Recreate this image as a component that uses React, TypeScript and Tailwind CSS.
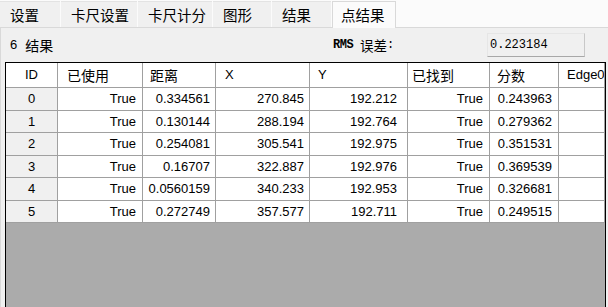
import React from 'react'

const tabs = ['设置', '卡尺设置', '卡尺计分', '图形', '结果']

// column widths include the right grid line
const cols = [
  { name: 'ID', w: 'w-[52px]', head: 'justify-center', cell: 'justify-center' },
  { name: '已使用', w: 'w-[85px]', head: 'pl-[9px]', cell: 'justify-end pr-[6px]' },
  { name: '距离', w: 'w-[73px]', head: 'pl-[7px]', cell: 'justify-end pr-[5px]' },
  { name: 'X', w: 'w-[94px]', head: 'pl-[9px]', cell: 'justify-end pr-[5px]' },
  { name: 'Y', w: 'w-[98px]', head: 'pl-[8px]', cell: 'justify-end pr-[10px]' },
  { name: '已找到', w: 'w-[82px]', head: 'pl-[4px]', cell: 'justify-end pr-[6px]' },
  { name: '分数', w: 'w-[69px]', head: 'pl-[7px]', cell: 'justify-end pr-[6px]' },
  { name: 'Edge0', w: 'w-[46px]', head: 'pl-[8px]', cell: 'justify-end pr-[6px]' },
]

const rows = [
  ['0', 'True', '0.334561', '270.845', '192.212', 'True', '0.243963', ''],
  ['1', 'True', '0.130144', '288.194', '192.764', 'True', '0.279362', ''],
  ['2', 'True', '0.254081', '305.541', '192.975', 'True', '0.351531', ''],
  ['3', 'True', '0.16707', '322.887', '192.976', 'True', '0.369539', ''],
  ['4', 'True', '0.0560159', '340.233', '192.953', 'True', '0.326681', ''],
  ['5', 'True', '0.272749', '357.577', '192.711', 'True', '0.249515', ''],
]

export default function App() {
  return (
    <div className="w-[608px] h-[307px] overflow-hidden bg-[#f0f0f0] flex flex-col text-black font-['Liberation_Sans','Noto_Sans_CJK_SC',sans-serif]">
      {/* Tab strip */}
      <div className="h-[27px] flex items-end bg-[#fbfbfb] gap-px">
        {tabs.map((t, i) => (
          <div
            key={t}
            className={`h-[26px] flex items-center bg-[#f0f0f0] border-t border-[#e3e3e3] pl-[10px] text-[14.5px] font-['Noto_Sans_CJK_SC',sans-serif] ${
              ['w-[60px]', 'w-[76px]', 'w-[74px]', 'w-[58px]', 'w-[59px]'][i]
            }`}
          >
            {t}
          </div>
        ))}
        <div className="h-[27px] w-[64px] -mb-px z-10 flex items-center bg-[#fbfbfb] border-x border-t border-[#d9d9d9] pl-[8px] text-[14.5px] font-['Noto_Sans_CJK_SC',sans-serif]">
          点结果
        </div>
      </div>

      {/* Tab page */}
      <div className="flex-1 min-h-0 flex flex-col border-l border-t border-[#d9d9d9]">
        <div className="h-[34px] flex items-center shrink-0 pl-[9px]">
          <span className="w-[323px] flex items-center text-[14px] font-['Noto_Sans_CJK_SC',sans-serif]">
            <span className="font-['Liberation_Sans',sans-serif] text-[13px]">6</span>
            <span className="ml-[8px]">结果</span>
          </span>
          <span className="w-[154px] flex items-center">
            <span className="text-[12px] font-bold font-['Liberation_Mono',monospace] tracking-[-0.5px]">RMS</span>
            <span className="ml-[7px] text-[13.5px] font-['Noto_Sans_CJK_SC',sans-serif]">误差</span>
            <span className="text-[12px] font-['Liberation_Mono',monospace]">:</span>
          </span>
          <div className="w-[98px] h-[24px] flex items-center bg-[#f0f0f0] border border-[#e6e6e6] border-b-[#a8a8a8] border-r-[#c8c8c8] pl-[2px] text-[12px] font-['Liberation_Mono',monospace]">
            0.223184
          </div>
        </div>

        {/* Data grid */}
        <div className="ml-[4px] w-[601px] flex-1 border-l border-t border-r border-black bg-[#ababab] flex flex-col overflow-hidden">
          <div className="flex h-[25px] bg-white shrink-0">
            {cols.map((c) => (
              <div
                key={c.name}
                className={`${c.w} shrink-0 flex items-center border-r border-b border-[#a0a0a0] whitespace-nowrap overflow-hidden ${c.head} ${
                  /[A-Za-z]/.test(c.name) ? 'text-[13px]' : "text-[14px] font-['Noto_Sans_CJK_SC',sans-serif]"
                }`}
              >
                {c.name}
              </div>
            ))}
          </div>
          {rows.map((r) => (
            <div key={r[0]} className="flex h-[22.5px] shrink-0">
              {r.map((v, j) => (
                <div
                  key={j}
                  className={`${cols[j].w} shrink-0 flex items-center border-r border-b border-[#a0a0a0] text-[13px] whitespace-nowrap ${
                    cols[j].cell
                  } ${j === 0 ? 'bg-[#f0f0f0]' : 'bg-white'}`}
                >
                  {v}
                </div>
              ))}
            </div>
          ))}
        </div>
      </div>
    </div>
  )
}
